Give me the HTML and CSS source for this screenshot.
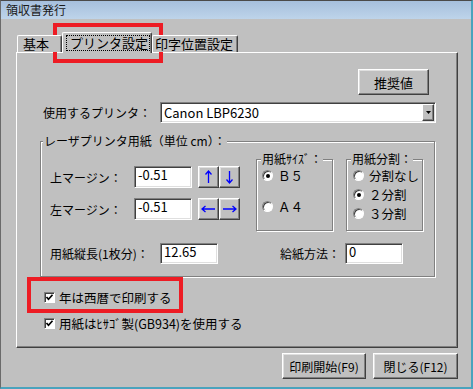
FILE: index.html
```html
<!DOCTYPE html>
<html lang="ja">
<head>
  <meta charset="UTF-8">
  <title>領収書発行</title>
  <link rel="stylesheet" href="styles.css">
</head>
<body>

  <div class="window">
    <div class="titlebar">領収書発行</div>

    <div class="tabs">
      <div class="tab tab-basic">基本</div>
      <div class="tab tab-printer"><span class="focus">プリンタ設定</span></div>
      <div class="tab tab-layout">印字位置設定</div>
    </div>

    <div class="panel">
      <div class="panel-actions">
        <button class="btn btn-recommend">推奨値</button>
      </div>

      <div class="printer-row">
        <span class="printer-label">使用するプリンタ：</span>
        <div class="combo">
          <span class="combo-text">Canon LBP6230</span>
          <span class="combo-btn">
            <svg width="5" height="3" viewBox="0 0 5 3"><path d="M0 0h5L2.5 3z" fill="#000"/></svg>
          </span>
        </div>
      </div>

      <div class="groupbox paper">
        <div class="group-title paper-title">レーザプリンタ用紙（単位 cm）：</div>

        <div class="paper-top">
          <div class="margins">
            <div class="field-row">
              <span class="field-label">上マージン：</span>
              <span class="textbox">-0.51</span>
              <span class="spin">
                <span class="btn spin-btn"><svg width="19" height="20" viewBox="0 0 19 20"><path d="M9.5 4v12M6.5 7.5l3-3.5 3 3.5"/></svg></span>
                <span class="btn spin-btn"><svg width="19" height="20" viewBox="0 0 19 20"><path d="M9.5 4v12M6.5 12.5l3 3.5 3-3.5"/></svg></span>
              </span>
            </div>
            <div class="field-row">
              <span class="field-label">左マージン：</span>
              <span class="textbox">-0.51</span>
              <span class="spin">
                <span class="btn spin-btn"><svg width="19" height="20" viewBox="0 0 19 20"><path d="M3 10h13M6.5 7l-3.5 3 3.5 3"/></svg></span>
                <span class="btn spin-btn"><svg width="19" height="20" viewBox="0 0 19 20"><path d="M3 10h13M12.5 7l3.5 3-3.5 3"/></svg></span>
              </span>
            </div>
          </div>

          <div class="groupbox group-size">
            <div class="group-title">用紙ｻｲｽﾞ：</div>
            <div class="radio checked"><span class="radio-mark"></span>Ｂ５</div>
            <div class="radio radio-a4"><span class="radio-mark"></span>Ａ４</div>
          </div>

          <div class="groupbox group-split">
            <div class="group-title">用紙分割：</div>
            <div class="radio"><span class="radio-mark"></span>分割なし</div>
            <div class="radio checked"><span class="radio-mark"></span>２分割</div>
            <div class="radio"><span class="radio-mark"></span>３分割</div>
          </div>
        </div>

        <div class="paper-bottom">
          <span class="length-label">用紙縦長(1枚分)：</span>
          <span class="textbox textbox-short">12.65</span>
          <span class="feed-label">給紙方法：</span>
          <span class="textbox textbox-short">0</span>
        </div>
      </div>

      <div class="checks">
        <div class="check"><span class="checkbox"><svg width="9" height="9" viewBox="0 0 9 9"><path d="M1.5 4l2 2.2L7.5 1.8"/></svg></span>年は西暦で印刷する</div>
        <div class="check"><span class="checkbox"><svg width="9" height="9" viewBox="0 0 9 9"><path d="M1.5 4l2 2.2L7.5 1.8"/></svg></span>用紙はﾋｻｺﾞ製(GB934)を使用する</div>
      </div>
    </div>

    <div class="footer">
      <button class="btn btn-print">印刷開始(F9)</button>
      <button class="btn btn-close">閉じる(F12)</button>
    </div>

    <div class="mark mark-tab"></div>
    <div class="mark mark-check"></div>
  </div>

</body>
</html>
```

FILE: styles.css
```css
* { box-sizing: border-box; }
body { margin: 0; font-family: "Noto Sans CJK JP", "MS UI Gothic", sans-serif; font-size: 12px; color: #000; }

.window { position: relative; width: 473px; height: 389px; background: #c0c0c0; overflow: hidden; }
.window::after { content: ""; position: absolute; inset: 0; border-left: 1px solid #6a6a6a; border-top: 1px solid #4a4a4a; border-right: 2px solid #4aa3bd; border-bottom: 2px solid #4aa3bd; pointer-events: none; }
.titlebar { height: 19px; padding-left: 6px; line-height: 19px; background: linear-gradient(#a4bedc, #bed4ea); color: #1a1a1a; }

/* タブ */
.tabs { display: flex; align-items: flex-end; height: 21px; margin: 13px 0 0 17px; position: relative; z-index: 1; }
.tab { height: 17px; margin-bottom: 1px; padding: 1px 0 0 5px; font-size: 13px; line-height: 14px; background: #c0c0c0; border: 1px solid; border-color: #fff #404040 transparent #fff; border-bottom: 0; border-radius: 2px 2px 0 0; box-shadow: inset -1px 0 #808080; }
.tab-basic { width: 45px; }
.tab-printer { width: 90px; height: 21px; margin-bottom: 0; padding: 2px 0 0 3px; }
.tab-layout { width: 86px; padding-left: 2px; }
.focus { display: inline-block; height: 16px; padding: 0 1px 0 3px; border: 1px dotted #000; line-height: 14px; }

/* パネル */
.panel { width: 442px; height: 296px; margin: -1px 0 0 16px; border: 1px solid; border-color: #fff #404040 #404040 #fff; box-shadow: inset -1px -1px #808080; }

.btn { display: inline-flex; align-items: center; justify-content: center; padding: 0; font: inherit; color: #000; background: #c0c0c0; border: 1px solid; border-color: #fff #404040 #404040 #fff; box-shadow: inset -1px -1px #808080, inset 1px 1px #dfdfdf; }
.panel-actions { display: flex; justify-content: flex-end; padding: 16px 28px 0 0; }
.btn-recommend { width: 71px; height: 26px; font-size: 13px; }

.printer-row { display: flex; align-items: center; height: 21px; margin-top: 7px; padding-left: 26px; }
.printer-label { width: 117px; }
.combo { display: flex; align-items: center; justify-content: space-between; width: 276px; height: 21px; padding: 0 1px 0 3px; background: #fff; border: 1px solid; border-color: #808080 #fff #fff #808080; box-shadow: inset 1px 1px #404040, inset -1px -1px #dfdfdf; }
.combo-text { font-size: 13px; line-height: 15px; }
.combo-btn { display: flex; align-items: center; justify-content: center; width: 12px; height: 17px; background: #c0c0c0; border: 1px solid; border-color: #fff #404040 #404040 #fff; box-shadow: inset -1px -1px #808080; }

/* グループボックス */
.groupbox { border: 1px solid #808080; box-shadow: 1px 1px 0 #fff, inset 1px 1px 0 #fff; }
.group-title { width: fit-content; margin-top: -8px; padding: 0 1px; line-height: 14px; background: #c0c0c0; }

.paper { width: 395px; margin: 18px 0 0 23px; padding: 0 0 12px 9px; }
.paper-title { margin-left: -7px; }
.paper-top { display: flex; align-items: flex-start; margin-top: 11px; }

.margins { display: flex; flex-direction: column; gap: 10px; margin-top: 7px; }
.field-row { display: flex; align-items: center; height: 22px; }
.field-label { width: 84px; }
.textbox { width: 58px; height: 22px; padding: 1px 0 0 3px; font-size: 13px; line-height: 14px; background: #fff; border: 1px solid; border-color: #808080 #fff #fff #808080; box-shadow: inset 1px 1px #404040, inset -1px -1px #dfdfdf; }
.textbox-short { height: 21px; }
.spin { display: flex; margin-left: 6px; }
.spin-btn { width: 21px; height: 22px; }
.spin-btn svg { fill: none; stroke: #0000ff; stroke-width: 1.3; }

.group-size, .group-split { width: 77px; height: 72px; }
.group-size { margin-left: 16px; padding-left: 5px; }
.group-split { margin-left: 13px; padding-left: 6px; }
.group-size .group-title { margin-left: -1px; }
.group-split .group-title { margin-left: -2px; }

.radio { display: flex; align-items: center; gap: 5px; height: 19px; font-size: 12.5px; }
.group-size .radio:first-of-type { margin-top: 7px; }
.group-size .radio-a4 { margin-top: 12px; }
.group-split .radio:first-of-type { margin-top: 3px; }
.radio-mark { position: relative; width: 11px; height: 11px; border-radius: 50%; background: #fff; border: 1px solid; border-color: #808080 #fff #fff #808080; box-shadow: inset 1px 1px #404040; }
.radio.checked .radio-mark::after { content: ""; position: absolute; left: 2.5px; top: 2.5px; width: 4px; height: 4px; border-radius: 50%; background: #000; }

.paper-bottom { display: flex; align-items: center; height: 21px; margin-top: 12px; }
.length-label { width: 110px; }
.feed-label { width: 65px; margin-left: 62px; }

/* チェック */
.checks { display: flex; flex-direction: column; gap: 10px; margin-top: 12px; padding-left: 27px; }
.check { display: flex; align-items: center; gap: 4px; height: 16px; font-size: 12.5px; }
.checkbox { display: flex; align-items: center; justify-content: center; width: 11px; height: 11px; background: #fff; border: 1px solid; border-color: #808080 #fff #fff #808080; box-shadow: inset 1px 1px #404040; }
.checkbox svg { fill: none; stroke: #000; stroke-width: 1.7; }

.footer { display: flex; justify-content: flex-end; gap: 7px; margin-top: 5px; padding-right: 15px; }
.btn-print { width: 84px; height: 26px; }
.btn-close { width: 85px; height: 26px; }

/* 強調枠 */
.mark { position: absolute; border: 4px solid #ed1c24; pointer-events: none; }
.mark-tab { left: 53px; top: 23px; width: 110px; height: 40px; }
.mark-check { left: 27px; top: 277px; width: 156px; height: 36px; }
```
